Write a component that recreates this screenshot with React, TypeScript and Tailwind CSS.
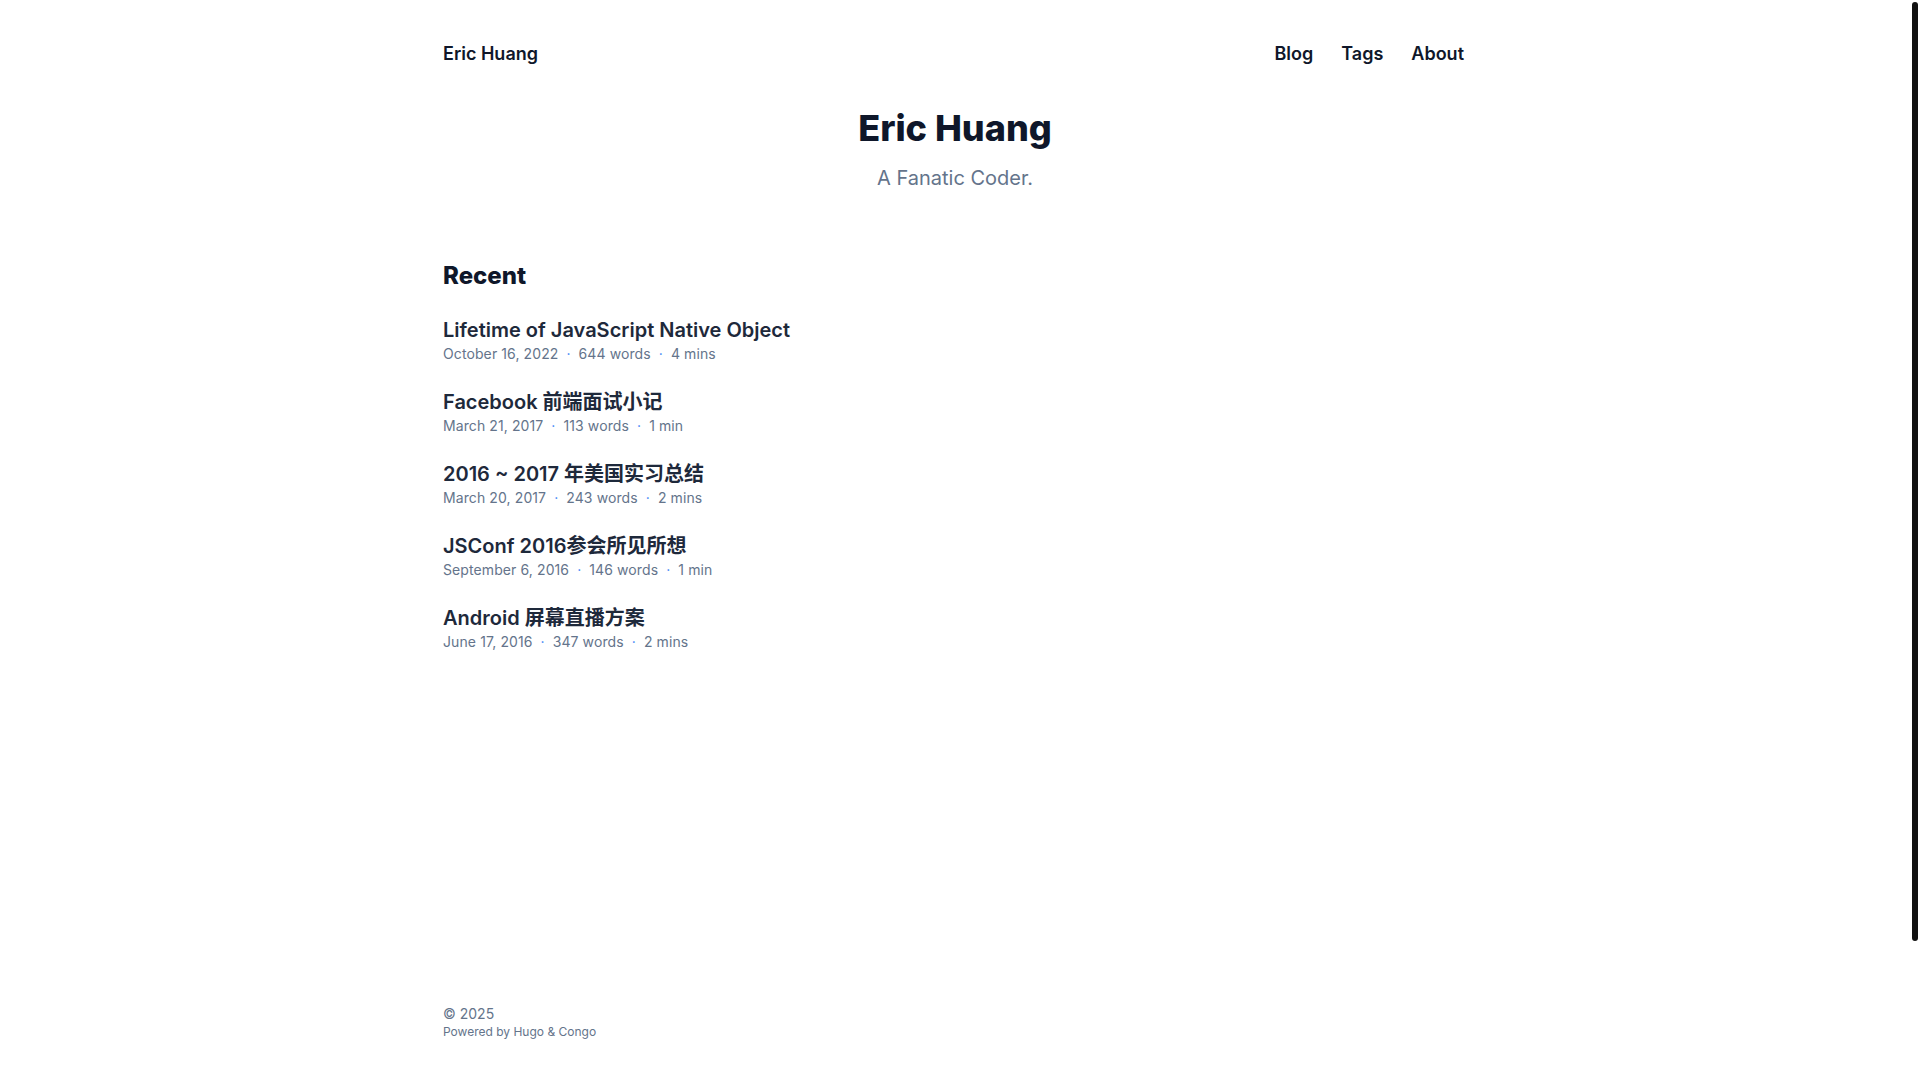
const posts = [
  { title: "Lifetime of JavaScript Native Object", date: "October 16, 2022", words: "644 words", time: "4 mins" },
  { title: "Facebook 前端面试小记", date: "March 21, 2017", words: "113 words", time: "1 min" },
  { title: "2016 ~ 2017 年美国实习总结", date: "March 20, 2017", words: "243 words", time: "2 mins" },
  { title: "JSConf 2016参会所见所想", date: "September 6, 2016", words: "146 words", time: "1 min" },
  { title: "Android 屏幕直播方案", date: "June 17, 2016", words: "347 words", time: "2 mins" },
];

const menu = ["Blog", "Tags", "About"];

function Dot() {
  return <span className="px-2 text-[#3b82f6]">&middot;</span>;
}

export default function App() {
  return (
    <div className="flex h-screen w-full bg-white font-['Inter','Noto_Sans_CJK_SC',sans-serif]">
      <div className="flex h-full flex-1 min-w-0">
        <div className="mx-auto flex h-full w-full max-w-7xl flex-col px-32 text-lg leading-7 text-[#0f172a]">
          {/* Header */}
          <header className="py-10 font-semibold text-[#0f172a]">
            <nav className="flex justify-between">
              <a href="#">Eric Huang</a>
              <ul className="mr-[3px] flex flex-row gap-7">
                {menu.map((m) => (
                  <li key={m}>
                    <a href="#">{m}</a>
                  </li>
                ))}
              </ul>
            </nav>
          </header>

          <main className="grow">
            {/* Profile */}
            <article className="flex flex-col items-center text-center">
              <h1 className="text-4xl leading-10 font-extrabold text-[#0f172a]">Eric Huang</h1>
              <h2 className="mt-4 text-xl leading-7 text-[#64748b]">A Fanatic Coder.</h2>
            </article>

            {/* Recent */}
            <section className="mt-[68px]">
              <h2 className="text-2xl leading-8 font-extrabold text-[#0f172a]">Recent</h2>
              {posts.map((p) => (
                <article key={p.title} className="mt-6 flex flex-row">
                  <div>
                    <h3 className="flex items-center text-xl leading-7 font-semibold text-[#1e293b]">
                      <a href="#">{p.title}</a>
                    </h3>
                    <div className="text-sm leading-5 tracking-[0.1px] text-[#64748b]">
                      <span>{p.date}</span>
                      <Dot />
                      <span>{p.words}</span>
                      <Dot />
                      <span>{p.time}</span>
                    </div>
                  </div>
                </article>
              ))}
            </section>
          </main>

          {/* Footer */}
          <footer className="py-10">
            <p className="text-sm leading-5 text-[#64748b]">&copy; 2025</p>
            <p className="text-xs leading-4 text-[#64748b]">Powered by Hugo &amp; Congo</p>
          </footer>
        </div>
      </div>

      {/* scrollbar gutter */}
      <div className="w-[10px] shrink-0">
        <div className="mx-auto mt-[2px] h-[939px] w-[6px] rounded-full bg-[#111111]" />
      </div>
    </div>
  );
}
